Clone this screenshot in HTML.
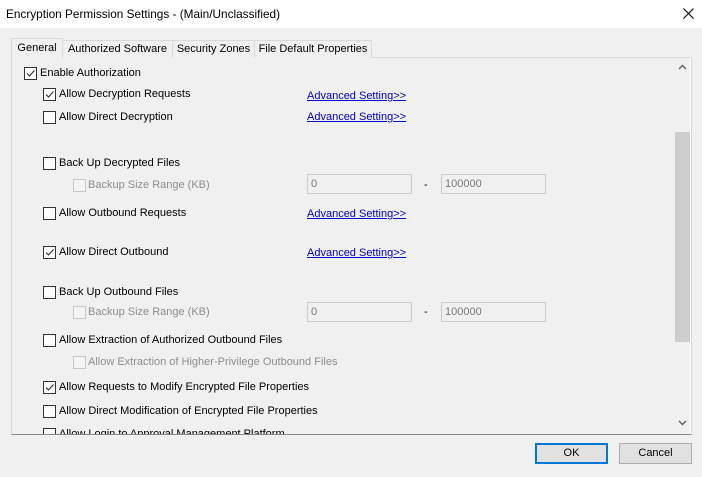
<html><head><style>
body{margin:0;width:702px;height:477px;background:#f0f0f0;font-family:"Liberation Sans",sans-serif;font-size:11px;color:#000;position:relative;overflow:hidden}
.a{position:absolute;white-space:nowrap}
.cb{position:absolute;width:11px;height:11px;border:1px solid #333;background:#fff}
.cb.d{border-color:#c8c8c8;background:#f4f4f4}
.cb svg{position:absolute;left:0;top:0}
.t{position:absolute;line-height:14px;white-space:nowrap}
.g{color:#8d8d8d}
.lk{position:absolute;color:#0000cc;text-decoration:underline;line-height:14px;white-space:nowrap}
.in{position:absolute;border:1px solid #ccc;background:#f0f0f0;color:#777;line-height:18px;padding-left:3px;box-sizing:border-box;width:105px;height:20px}
.tab{position:absolute;top:40px;height:18px;border:1px solid #d9d9d9;border-bottom:none;background:#f0f0f0;line-height:17px;text-align:center;box-sizing:border-box;white-space:nowrap}
.btn{position:absolute;top:443px;width:73px;height:21px;border:1px solid #adadad;background:#e1e1e1;text-align:center;line-height:19px;box-sizing:border-box}
</style></head><body>
<div class="a" style="left:0;top:0;width:702px;height:28px;background:#fff"></div>
<div class="t" style="left:6px;top:7px;font-size:11.8px">Encryption Permission Settings - (Main/Unclassified)</div>
<svg class="a" style="left:683px;top:8px" width="11" height="11"><path d="M0.5 0.5L10.5 10.5M10.5 0.5L0.5 10.5" stroke="#000" stroke-width="1.1"/></svg>
<div class="a" style="left:11px;top:57px;width:681px;height:378px;border:1px solid #d9d9d9;border-bottom:1px solid #888;box-sizing:border-box;background:#f0f0f0"></div>
<div class="tab" style="left:62px;width:111px">Authorized Software</div>
<div class="tab" style="left:172px;width:83px">Security Zones</div>
<div class="tab" style="left:254px;width:118px">File Default Properties</div>
<div class="tab" style="left:11px;top:38px;height:21px;width:52px;background:#f0f0f0;line-height:19px">General</div>
<div class="a" style="left:673px;top:58px;width:18px;height:376px;background:#f0f0f0"></div>
<div class="a" style="left:675px;top:132px;width:15px;height:210px;background:#cdcdcd"></div>
<div class="a" style="left:690px;top:58px;width:1px;height:376px;background:#fff"></div>
<svg class="a" style="left:678px;top:64px" width="9" height="6"><path d="M1 5L4.5 1.5L8 5" stroke="#606060" stroke-width="1.4" fill="none"/></svg>
<svg class="a" style="left:678px;top:420px" width="9" height="6"><path d="M1 1L4.5 4.5L8 1" stroke="#606060" stroke-width="1.4" fill="none"/></svg>

<div class="cb" style="left:24px;top:67px"><svg width="11" height="11"><path d="M2 5.5L4.5 8L9.5 2.5" stroke="#222" fill="none"/></svg></div><div class="t" style="left:40px;top:66px">Enable Authorization</div>
<div class="cb" style="left:43px;top:88px"><svg width="11" height="11"><path d="M2 5.5L4.5 8L9.5 2.5" stroke="#222" fill="none"/></svg></div><div class="t" style="left:59px;top:87px">Allow Decryption Requests</div>
<div class="lk" style="left:307px;top:89px">Advanced Setting&gt;&gt;</div>
<div class="cb" style="left:43px;top:111px"></div><div class="t" style="left:59px;top:110px">Allow Direct Decryption</div>
<div class="lk" style="left:307px;top:110px">Advanced Setting&gt;&gt;</div>
<div class="cb" style="left:43px;top:157px"></div><div class="t" style="left:59px;top:156px">Back Up Decrypted Files</div>
<div class="cb d" style="left:73px;top:179px"></div><div class="t g" style="left:88px;top:178px">Backup Size Range (KB)</div>
<div class="in" style="left:307px;top:174px">0</div><div class="t" style="left:424px;top:178px">-</div><div class="in" style="left:441px;top:174px">100000</div>
<div class="cb" style="left:43px;top:207px"></div><div class="t" style="left:59px;top:206px">Allow Outbound Requests</div>
<div class="lk" style="left:307px;top:207px">Advanced Setting&gt;&gt;</div>
<div class="cb" style="left:43px;top:246px"><svg width="11" height="11"><path d="M2 5.5L4.5 8L9.5 2.5" stroke="#222" fill="none"/></svg></div><div class="t" style="left:59px;top:245px">Allow Direct Outbound</div>
<div class="lk" style="left:307px;top:246px">Advanced Setting&gt;&gt;</div>
<div class="cb" style="left:43px;top:286px"></div><div class="t" style="left:59px;top:285px">Back Up Outbound Files</div>
<div class="cb d" style="left:73px;top:306px"></div><div class="t g" style="left:88px;top:305px">Backup Size Range (KB)</div>
<div class="in" style="left:307px;top:302px">0</div><div class="t" style="left:424px;top:305px">-</div><div class="in" style="left:441px;top:302px">100000</div>
<div class="cb" style="left:43px;top:334px"></div><div class="t" style="left:59px;top:333px">Allow Extraction of Authorized Outbound Files</div>
<div class="cb d" style="left:73px;top:356px"></div><div class="t g" style="left:88px;top:355px">Allow Extraction of Higher-Privilege Outbound Files</div>
<div class="cb" style="left:43px;top:381px"><svg width="11" height="11"><path d="M2 5.5L4.5 8L9.5 2.5" stroke="#222" fill="none"/></svg></div><div class="t" style="left:59px;top:380px">Allow Requests to Modify Encrypted File Properties</div>
<div class="cb" style="left:43px;top:405px"></div><div class="t" style="left:59px;top:404px">Allow Direct Modification of Encrypted File Properties</div>
<div class="a" style="left:12px;top:427px;width:660px;height:7px;overflow:hidden"><div class="cb" style="left:31px;top:1px"></div><div class="t" style="left:47px;top:0px">Allow Login to Approval Management Platform</div></div>

<div class="btn" style="left:535px;border:2px solid #0078d7;line-height:17px">OK</div>
<div class="btn" style="left:619px">Cancel</div>
</body></html>
